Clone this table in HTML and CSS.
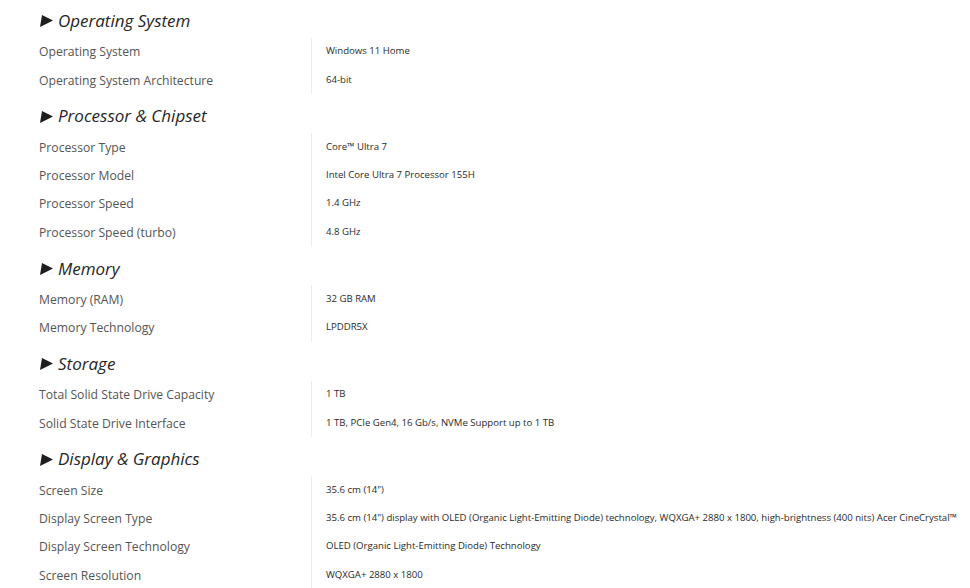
FILE: index.html
```html
<!DOCTYPE html>
<html>
<head>
<meta charset="utf-8">
<link rel="stylesheet" href="styles.css">
</head>
<body>
<div class="specs">
  <section class="group">
    <h2 class="group-title"><svg class="tri" width="13" height="12" viewBox="0 0 13 12"><polygon points="2,0 13,5.5 0,12" fill="#1e1e1e"/></svg>Operating System</h2>
    <div class="row"><div class="label">Operating System</div><div class="value">Windows 11 Home</div></div>
    <div class="row"><div class="label">Operating System Architecture</div><div class="value">64-bit</div></div>
  </section>
  <section class="group">
    <h2 class="group-title"><svg class="tri" width="13" height="12" viewBox="0 0 13 12"><polygon points="2,0 13,5.5 0,12" fill="#1e1e1e"/></svg>Processor &amp; Chipset</h2>
    <div class="row"><div class="label">Processor Type</div><div class="value">Core&trade; Ultra 7</div></div>
    <div class="row"><div class="label">Processor Model</div><div class="value">Intel Core Ultra 7 Processor 155H</div></div>
    <div class="row"><div class="label">Processor Speed</div><div class="value">1.4 GHz</div></div>
    <div class="row"><div class="label">Processor Speed (turbo)</div><div class="value">4.8 GHz</div></div>
  </section>
  <section class="group">
    <h2 class="group-title"><svg class="tri" width="13" height="12" viewBox="0 0 13 12"><polygon points="2,0 13,5.5 0,12" fill="#1e1e1e"/></svg>Memory</h2>
    <div class="row"><div class="label">Memory (RAM)</div><div class="value">32 GB RAM</div></div>
    <div class="row"><div class="label">Memory Technology</div><div class="value">LPDDR5X</div></div>
  </section>
  <section class="group">
    <h2 class="group-title"><svg class="tri" width="13" height="12" viewBox="0 0 13 12"><polygon points="2,0 13,5.5 0,12" fill="#1e1e1e"/></svg>Storage</h2>
    <div class="row"><div class="label">Total Solid State Drive Capacity</div><div class="value">1 TB</div></div>
    <div class="row"><div class="label">Solid State Drive Interface</div><div class="value">1 TB, PCIe Gen4, 16 Gb/s, NVMe Support up to 1 TB</div></div>
  </section>
  <section class="group">
    <h2 class="group-title"><svg class="tri" width="13" height="12" viewBox="0 0 13 12"><polygon points="2,0 13,5.5 0,12" fill="#1e1e1e"/></svg>Display &amp; Graphics</h2>
    <div class="row"><div class="label">Screen Size</div><div class="value">35.6 cm (14")</div></div>
    <div class="row"><div class="label">Display Screen Type</div><div class="value">35.6 cm (14") display with OLED (Organic Light-Emitting Diode) technology, WQXGA+ 2880 x 1800, high-brightness (400 nits) Acer CineCrystal&trade;</div></div>
    <div class="row"><div class="label">Display Screen Technology</div><div class="value">OLED (Organic Light-Emitting Diode) Technology</div></div>
    <div class="row"><div class="label">Screen Resolution</div><div class="value">WQXGA+ 2880 x 1800</div></div>
  </section>
</div>
</body>
</html>
```
FILE: styles.css
```css
html, body {
  margin: 0;
  padding: 0;
  background: #ffffff;
}
body {
  font-family: "Open Sans", "Noto Sans", sans-serif;
  overflow: hidden;
}
.specs {
  padding-left: 39px;
  margin-top: -1px;
}
.group-title {
  margin: 0;
  padding: 9px 0 4px 1px;
  line-height: 25.6px;
  font-size: 17px;
  font-style: italic;
  font-weight: 400;
  color: #262626;
  display: flex;
  align-items: center;
}
.tri {
  flex: none;
  margin-right: 5px;
  margin-top: 1px;
}
.row {
  display: flex;
  height: 28.4px;
  align-items: center;
}
.label {
  width: 272px;
  flex: none;
  font-size: 12.2px;
  color: #555555;
}
.value {
  align-self: stretch;
  display: flex;
  align-items: center;
  border-left: 1px solid #ececec;
  padding-left: 14px;
  padding-bottom: 2px;
  font-size: 9.6px;
  color: #2a2a2a;
  white-space: nowrap;
}
```
